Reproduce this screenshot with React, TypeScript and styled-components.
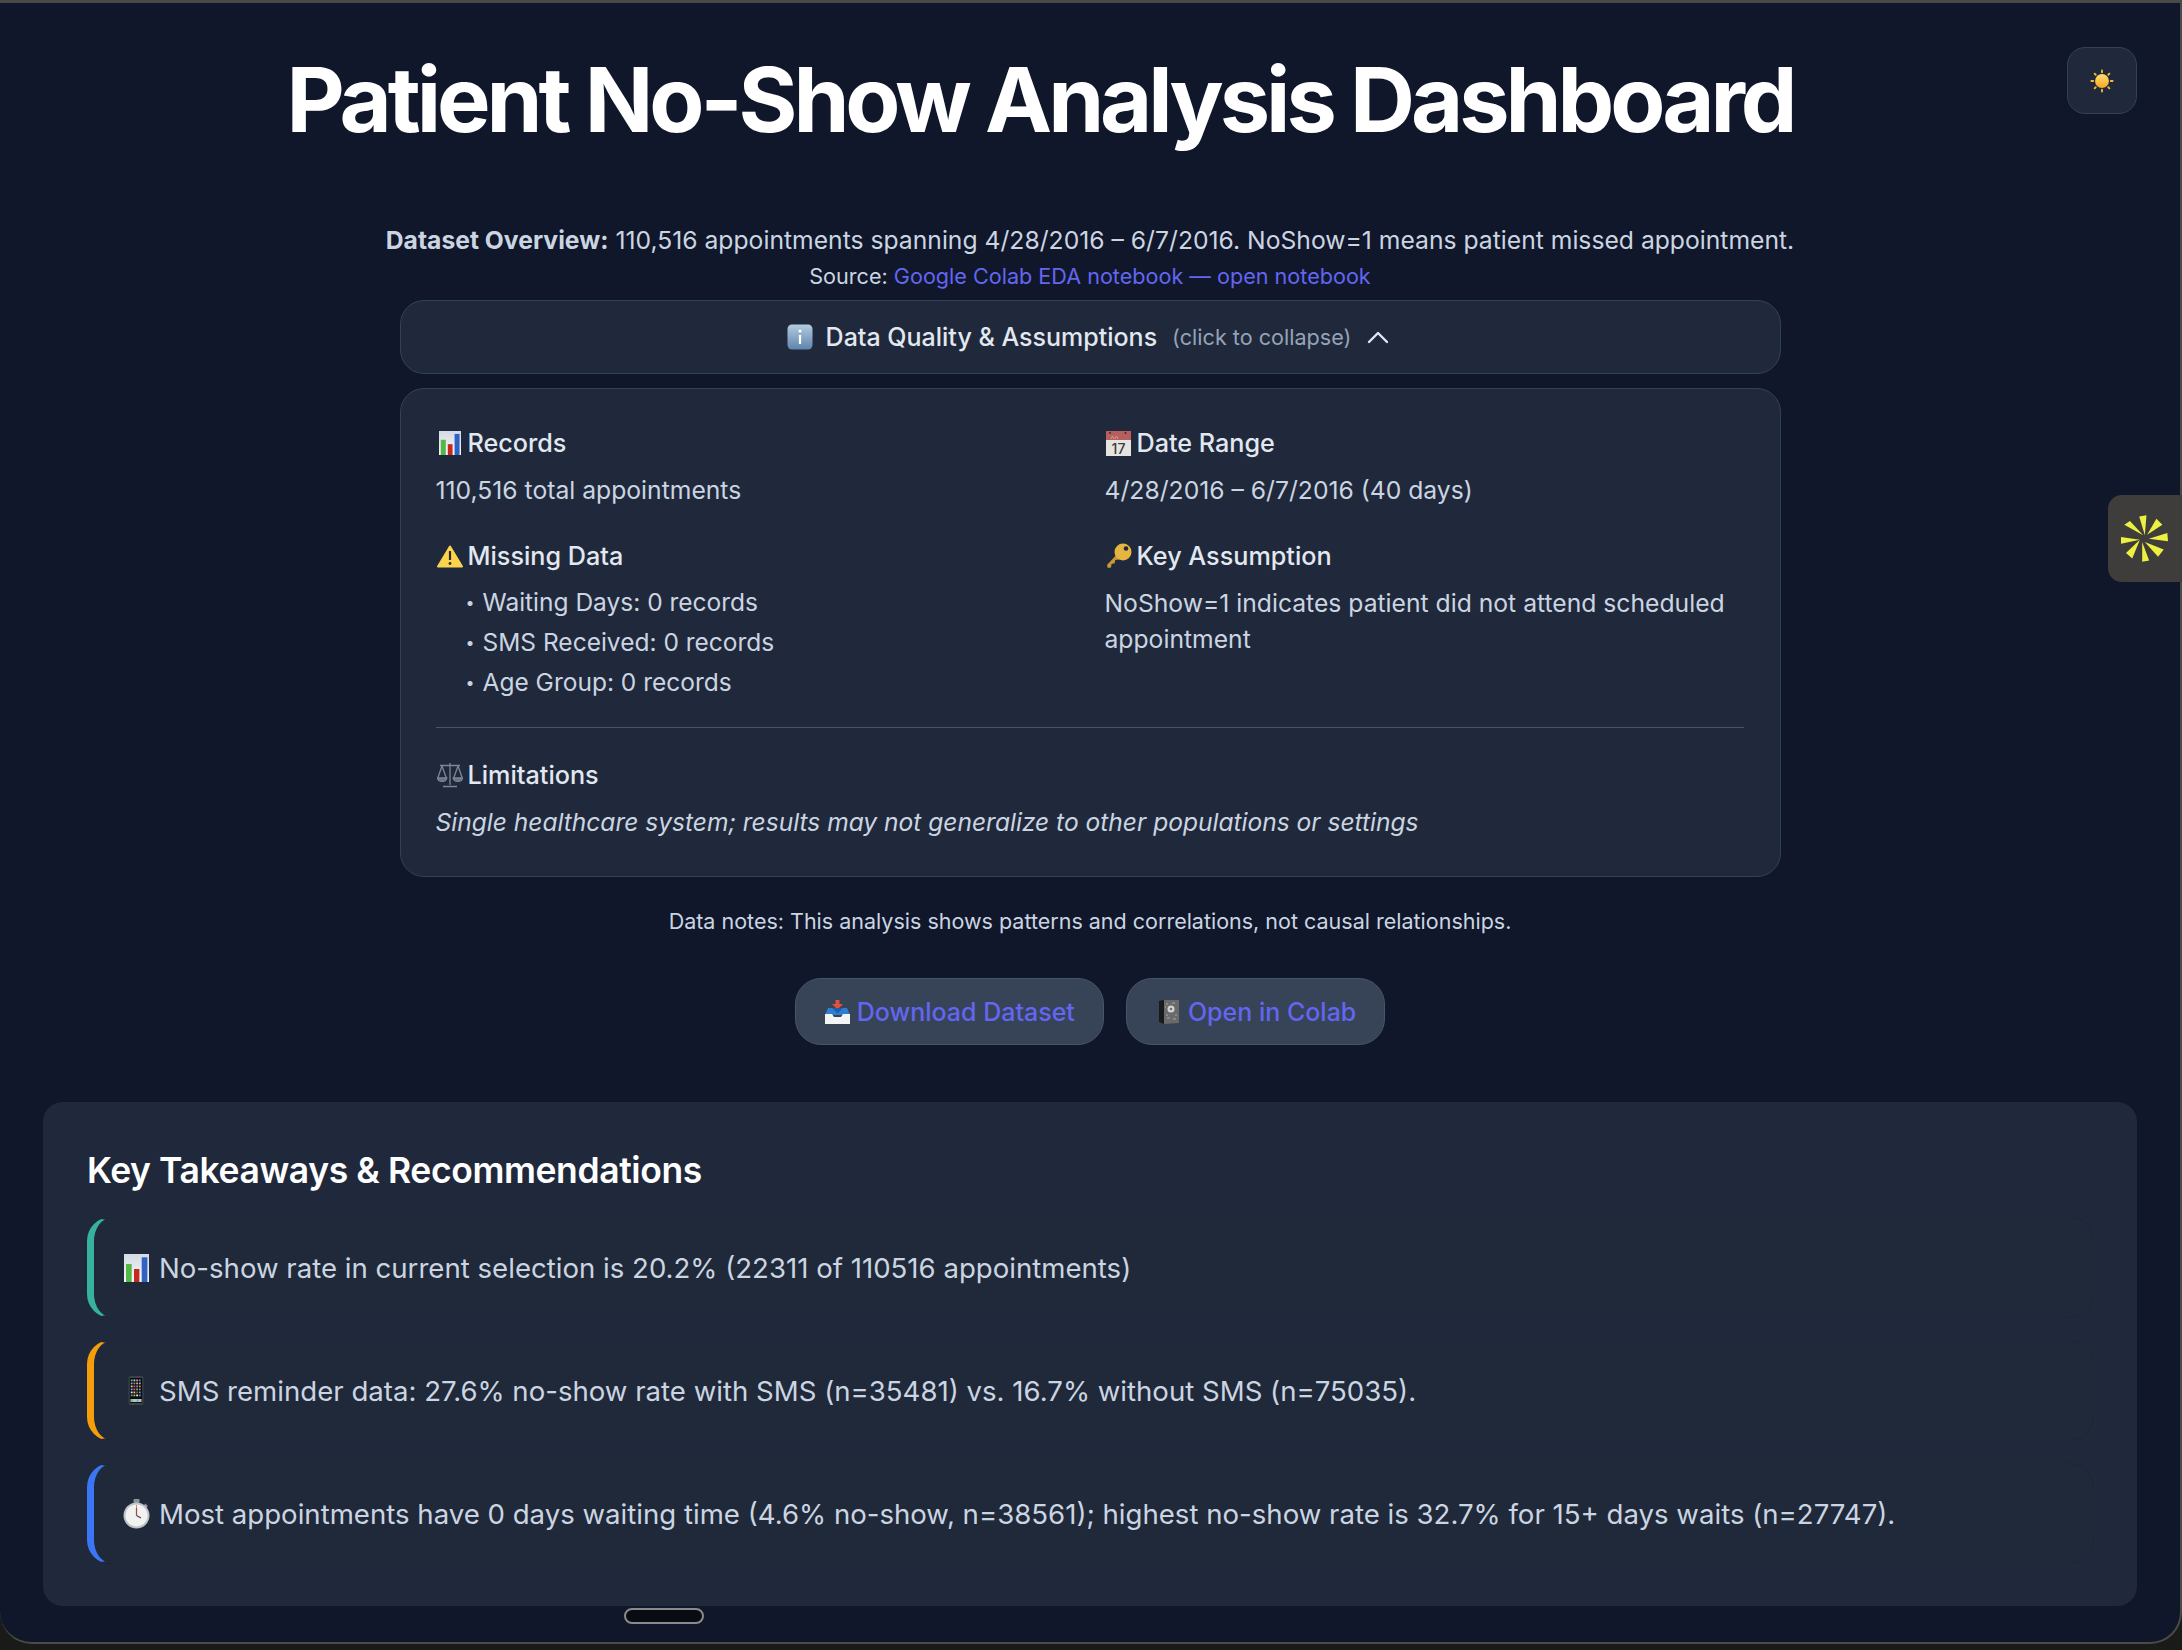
import React from "react";
import styled, { createGlobalStyle } from "styled-components";

const Global = createGlobalStyle`
  html, body { margin: 0; padding: 0; background: #1a1b18; }
  body { font-family: Inter, "Liberation Sans", sans-serif; }
  * { box-sizing: border-box; }
`;

const Page = styled.div`
  width: 2182px;
  height: 1650px;
  overflow: hidden;
  background: #1a1b18;
`;

const Frame = styled.div`
  position: relative;
  width: 2182px;
  height: 1644px;
  background: #10172a;
  border-style: solid;
  border-color: #4a4a48;
  border-width: 3px 2px 2px 0;
  border-radius: 0 0 32px 32px;
  padding: 0 43px;
`;

const Header = styled.header`
  display: flex;
  align-items: flex-start;
  gap: 30px;
  padding-top: 44px;
`;

const Title = styled.h1`
  flex: 1;
  margin: -2px 0 0;
  text-align: center;
  font-size: 90px;
  line-height: 110px;
  font-weight: 700;
  letter-spacing: -4.05px;
  color: #ffffff;
`;

const ThemeButton = styled.button`
  flex: none;
  width: 70px;
  height: 67px;
  border-radius: 18px;
  background: #20293b;
  border: 1px solid #334155;
  display: flex;
  align-items: center;
  justify-content: center;
  padding: 0;
`;

const Center = styled.section`
  width: 1381px;
  margin: 67px auto 0;
  text-align: center;
`;

const Overview = styled.p`
  margin: 0 -30px;
  font-size: 24.7px;
  line-height: 36px;
  color: #cbd5e1;
  strong { font-weight: 700; }
`;

const Source = styled.p`
  margin: 2px 0 8px;
  font-size: 21.6px;
  line-height: 32px;
  color: #cbd5e1;
`;

const Link = styled.a`
  color: #6366f1;
  text-decoration: none;
`;

const Toggle = styled.button`
  width: 100%;
  height: 74px;
  display: flex;
  align-items: center;
  justify-content: center;
  gap: 15px;
  background: #20293b;
  border: 1px solid #334155;
  border-radius: 24px;
  color: #e2e8f0;
  font-family: inherit;
  font-size: 25px;
  font-weight: 500;
  padding: 0 3px 0 0;
`;

const ToggleLabel = styled.span`
  display: inline-flex;
  align-items: center;
  gap: 13px;
`;

const Hint = styled.span`
  font-size: 21.6px;
  font-weight: 400;
  color: #94a3b8;
`;

const Card = styled.div`
  margin-top: 14px;
  height: 489px;
  background: #20293b;
  border: 1px solid #334155;
  border-radius: 24px;
  padding: 36px 36px 0 35px;
  text-align: left;
`;

const Columns = styled.div`
  display: grid;
  grid-template-columns: 641px 640px;
  column-gap: 28px;
`;

const Block = styled.div`
  margin-bottom: 30px;
  &:last-child { margin-bottom: 25px; }
`;

const BlockTitle = styled.h3`
  margin: 0 0 11px;
  display: flex;
  align-items: center;
  gap: 4px;
  font-size: 25.2px;
  line-height: 36px;
  font-weight: 500;
  color: #e2e8f0;
`;

const IconSlot = styled.span`
  flex: none;
  width: 28px;
  display: inline-flex;
  align-items: center;
  justify-content: center;
`;

const BlockText = styled.p<{ $italic?: boolean }>`
  margin: 0;
  font-size: ${(p) => (p.$italic ? "24.55px" : "24.7px")};
  line-height: 36px;
  color: #cbd5e1;
  font-style: ${(p) => (p.$italic ? "italic" : "normal")};
`;

const List = styled.ul`
  margin: -3px 0 0;
  padding: 0 0 0 30px;
  list-style: none;
`;

const ListItem = styled.li`
  display: flex;
  gap: 8px;
  font-size: 24.5px;
  line-height: 40px;
  color: #cbd5e1;
  &::before { content: "•"; font-size: 16px; }
`;

const Divider = styled.hr`
  margin: 0 0 29px;
  border: 0;
  border-top: 1px solid #475569;
`;

const Note = styled.p`
  margin: 28px 0 0;
  font-size: 21.5px;
  line-height: 32px;
  color: #cbd5e1;
`;

const Actions = styled.div`
  margin-top: 41px;
  display: flex;
  justify-content: center;
  gap: 22px;
`;

const ActionLink = styled.a`
  height: 67px;
  display: inline-flex;
  align-items: center;
  gap: 5px;
  padding: 0 28px;
  border-radius: 26px;
  background: #374357;
  border: 1px solid #475569;
  color: #6366f1;
  font-size: 25px;
  font-weight: 500;
  text-decoration: none;
`;

const Takeaways = styled.section`
  margin-top: 57px;
  height: 504px;
  background: #20293b;
  border-radius: 20px;
  padding: 46px 43px 0 44px;
`;

const TakeawaysTitle = styled.h2`
  margin: 0 0 23px;
  font-size: 35.5px;
  line-height: 46px;
  font-weight: 600;
  letter-spacing: -0.4px;
  color: #ffffff;
`;

const Items = styled.div`
  display: flex;
  flex-direction: column;
  gap: 22px;
`;

const Item = styled.div<{ $accent: string }>`
  height: 101px;
  display: flex;
  align-items: center;
  gap: 9px;
  padding-left: 28px;
  border-radius: 24px;
  background: #1f2939;
  border: 1px solid #1e2736;
  border-left: 7px solid ${(p) => p.$accent};
  font-size: 27.6px;
  color: #cbd5e1;
`;

const FloatTab = styled.div`
  position: absolute;
  right: -2px;
  top: 492px;
  width: 74px;
  height: 87px;
  background: #3f3d3b;
  border-radius: 14px 0 0 14px;
  display: flex;
  align-items: center;
  padding-left: 13px;
`;

const HomePill = styled.div`
  position: absolute;
  left: 624px;
  top: 1605px;
  width: 80px;
  height: 16px;
  border-radius: 8px;
  background: #0a0c14;
  border: 2px solid #8a8a8a;
`;

const Sun = () => (
  <svg width="24" height="24" viewBox="0 0 26 26">
    <defs><linearGradient id="s" x1="0" y1="0" x2="0" y2="1"><stop offset="0" stopColor="#ffe070" /><stop offset="1" stopColor="#f6a623" /></linearGradient></defs>
    <g stroke="#f5b93a" strokeWidth="2" strokeLinecap="round">
      <path d="M13 1.5v2M13 22.5v2M1.5 13h2M22.500 13h2M5 5l1.200 1.200M19.800 19.800 21 21M5 21l1.200-1.200M19.800 6.200 21 5" />
    </g>
    <circle cx="13" cy="13" r="7.500" fill="url(#s)" />
  </svg>
);
const Info = () => (
  <svg width="26" height="26" viewBox="0 0 26 26">
    <defs><linearGradient id="i" x1="0" y1="0" x2="0" y2="1"><stop offset="0" stopColor="#b4cbe2" /><stop offset="1" stopColor="#5f84ab" /></linearGradient></defs>
    <rect x="0.500" y="0.500" width="25" height="25" rx="4.500" fill="url(#i)" />
    <circle cx="13" cy="7" r="1.600" fill="#fff" />
    <rect x="11.900" y="11" width="2.200" height="9" fill="#fff" />
  </svg>
);
const Chart = ({ w = 22, gid }: { w?: number; gid: string }) => (
  <svg width={w} height={w * 1.12} viewBox="0 0 25 28">
    <defs><linearGradient id={gid} x1="0" y1="0" x2="0" y2="1"><stop offset="0" stopColor="#d4dbe4" /><stop offset="1" stopColor="#f6f8fa" /></linearGradient></defs>
    <rect width="25" height="28" fill={`url(#${gid})`} />
    <rect x="2" y="10" width="5.700" height="18" fill="#55b845" />
    <rect x="10" y="15" width="5.400" height="13" fill="#c5281f" />
    <rect x="17.700" y="3.300" width="5.700" height="24.700" fill="#2f62c2" />
  </svg>
);
const Calendar = () => (
  <svg width="25" height="25" viewBox="0 0 25 25">
    <rect width="25" height="9" fill="#b5605f" />
    <rect y="9" width="25" height="16" fill="#e6e4e1" />
    <circle cx="4" cy="2" r="1" fill="#3a2a2a" />
    <circle cx="19.500" cy="2" r="1" fill="#3a2a2a" />
    <path d="M5 8l1.500-3L8 8M9 8l1.500-3L12 8" stroke="#d99a98" strokeWidth="0.900" fill="none" />
    <text x="12.500" y="23" fontSize="14" fontWeight="500" textAnchor="middle" fill="#3c3c3c" fontFamily="Inter">17</text>
  </svg>
);
const Warning = () => (
  <svg width="26" height="23" viewBox="0 0 26 23">
    <path d="M13 1.500 25 21.500H1Z" fill="#fcd34d" stroke="#fcd34d" strokeWidth="2" strokeLinejoin="round" />
    <path d="M13 6v9" stroke="#2e2a1a" strokeWidth="2.200" />
    <circle cx="13" cy="18.500" r="1.400" fill="#2e2a1a" />
  </svg>
);
const KeyIcon = () => (
  <svg width="26" height="26" viewBox="0 0 26 26">
    <path d="M12.500 9.500 1 22l.8 3 3.200-.6L5.500 21l3.200-.8.500-3.200 4-.6 3-3Z" fill="#c9962f" />
    <circle cx="17" cy="9" r="8.500" fill="#e4b63f" />
    <circle cx="20" cy="5.500" r="2.300" fill="#20293b" />
  </svg>
);
const Scales = () => (
  <svg width="26" height="26" viewBox="0 0 26 26" fill="none" stroke="#7d8696" strokeWidth="1.300">
    <path d="M13 1v22M6 24.500h14M3 3.500h20M5 4 .8 16M5 4l4.300 12M21 4l-4.300 12M21 4l4.300 12" />
    <path d="M.5 16a4.700 4 0 0 0 9.300 0ZM16.200 16a4.700 4 0 0 0 9.300 0Z" fill="#69717f" />
  </svg>
);
const Inbox = () => (
  <svg width="25" height="24" viewBox="0 0 25 24">
    <path d="M12.500 0v5" stroke="#e2513f" strokeWidth="4" />
    <path d="M7 4h11l-5.500 5.500Z" fill="#e2513f" />
    <path d="M3 8h19l3 7H0Z" fill="#2f7fd1" />
    <path d="M7 8h11l-5.500 5.500Z" fill="#1f5fa8" />
    <path d="M0 14h7l2 3h7l2-3h7v10H0Z" fill="#f2f4f6" />
  </svg>
);
const Notebook = () => (
  <svg width="20" height="24" viewBox="0 0 20 24">
    <path d="M0 1 5 0v24L0 22Z" fill="#1a1a1a" />
    <path d="M5 0h15v23L5 24Z" fill="#6a6a6a" />
    <path d="M7 4h2M13 3h3M8 18h3M14 19h3M7 15h2M16 15h2M6 7h1" stroke="#a8a8a8" strokeWidth="1.200" />
    <circle cx="12" cy="9" r="3.500" fill="#d4d4d4" />
    <circle cx="12" cy="9" r="1.300" fill="#707070" />
  </svg>
);
const phoneDots = ["#62c26a","#c8d0dc","#e08ad0","#7a8a9a","#5ab0e0","#8a8a8a","#e8b040","#5ad0d0","#f0d050","#e05a5a","#a070e0","#e08a30","#5ab0e0","#e050a0","#62c26a","#8a8a8a","#e8e8e8","#f0d050","#6a6a6a","#50a0e0","#30a0e0","#f0a030","#e8e8e8","#7a8a9a"];
const Phone = () => (
  <svg width="16" height="29" viewBox="0 0 16 29">
    <rect x="0.500" y="0" width="15" height="29" rx="2.500" fill="#3e424a" />
    <rect x="1.800" y="2" width="12.400" height="25" fill="#0b0d14" />
    {phoneDots.map((c, i) => (
      <rect key={i} x={2.800 + (i % 4) * 2.700} y={3.500 + Math.floor(i / 4) * 3} width="1.800" height="1.800" fill={c} />
    ))}
    <rect x="2.500" y="23" width="11" height="3" fill="#b8c0b8" />
    <rect x="3" y="23.500" width="2" height="2" fill="#62c26a" />
    <rect x="8.500" y="23.500" width="2" height="2" fill="#5ab0e0" />
  </svg>
);
const Stopwatch = () => (
  <svg width="27" height="30" viewBox="0 0 27 30">
    <rect x="10.500" y="0" width="6" height="4" rx="1" fill="#8e939b" />
    <path d="m21.500 5.500 2.500 2.500" stroke="#8e939b" strokeWidth="2.600" />
    <circle cx="13.500" cy="16.500" r="13" fill="#bfc3ca" />
    <circle cx="13.500" cy="16.500" r="11" fill="#f2f2f0" />
    <path d="M13.500 16.500V9M13.500 16.500l4.500 2.500" stroke="#444" strokeWidth="1.200" />
    <path d="M13.500 17v-11" stroke="#d24a3a" strokeWidth="0.700" />
  </svg>
);
const Chevron = () => (
  <svg width="24" height="24" viewBox="0 0 24 24" fill="none" stroke="#e2e8f0" strokeWidth="2.400" strokeLinecap="round" strokeLinejoin="round">
    <path d="m3 17 9-9 9 9" />
  </svg>
);
const Spark = () => (
  <svg width="47" height="47" viewBox="93 104 142 141" fill="#eef03f">
    <path d="M148 108 170 104 165 165Z" />
    <path d="M200 115 218 133 172 163Z" />
    <path d="M233 158 235 183 177 175Z" />
    <path d="M222 208 205 230 165 185Z" />
    <path d="M178 241 157 245 157 185Z" />
    <path d="M127 235 108 218 150 178Z" />
    <path d="M93 170 93 190 150 178Z" />
    <path d="M103 133 120 122 160 165Z" />
  </svg>
);

export default function App() {
  return (
    <Page>
      <Global />
      <Frame>
        <Header>
          <Title>Patient No-Show Analysis Dashboard</Title>
          <ThemeButton><Sun /></ThemeButton>
        </Header>
        <Center>
          <Overview>
            <strong>Dataset Overview:</strong> 110,516 appointments spanning 4/28/2016 – 6/7/2016. NoShow=1 means patient missed appointment.
          </Overview>
          <Source>Source: <Link>Google Colab EDA notebook — open notebook</Link></Source>
          <Toggle>
            <ToggleLabel><Info />Data Quality &amp; Assumptions</ToggleLabel>
            <Hint>(click to collapse)</Hint>
            <Chevron />
          </Toggle>
          <Card>
            <Columns>
              <div>
                <Block>
                  <BlockTitle><IconSlot><Chart gid="c1" /></IconSlot>Records</BlockTitle>
                  <BlockText>110,516 total appointments</BlockText>
                </Block>
                <Block>
                  <BlockTitle><IconSlot><Warning /></IconSlot>Missing Data</BlockTitle>
                  <List>
                    <ListItem>Waiting Days: 0 records</ListItem>
                    <ListItem>SMS Received: 0 records</ListItem>
                    <ListItem>Age Group: 0 records</ListItem>
                  </List>
                </Block>
              </div>
              <div>
                <Block>
                  <BlockTitle><IconSlot><Calendar /></IconSlot>Date Range</BlockTitle>
                  <BlockText>4/28/2016 – 6/7/2016 (40 days)</BlockText>
                </Block>
                <Block>
                  <BlockTitle><IconSlot><KeyIcon /></IconSlot>Key Assumption</BlockTitle>
                  <BlockText>NoShow=1 indicates patient did not attend scheduled appointment</BlockText>
                </Block>
              </div>
            </Columns>
            <Divider />
            <BlockTitle><IconSlot><Scales /></IconSlot>Limitations</BlockTitle>
            <BlockText $italic>Single healthcare system; results may not generalize to other populations or settings</BlockText>
          </Card>
          <Note>Data notes: This analysis shows patterns and correlations, not causal relationships.</Note>
          <Actions>
            <ActionLink><IconSlot><Inbox /></IconSlot>Download Dataset</ActionLink>
            <ActionLink><IconSlot><Notebook /></IconSlot>Open in Colab</ActionLink>
          </Actions>
        </Center>
        <Takeaways>
          <TakeawaysTitle>Key Takeaways &amp; Recommendations</TakeawaysTitle>
          <Items>
            <Item $accent="#38b2a0"><IconSlot><Chart w={25} gid="c2" /></IconSlot>No-show rate in current selection is 20.2% (22311 of 110516 appointments)</Item>
            <Item $accent="#f59e0b"><IconSlot><Phone /></IconSlot>SMS reminder data: 27.6% no-show rate with SMS (n=35481) vs. 16.7% without SMS (n=75035).</Item>
            <Item $accent="#3b76f6"><IconSlot><Stopwatch /></IconSlot>Most appointments have 0 days waiting time (4.6% no-show, n=38561); highest no-show rate is 32.7% for 15+ days waits (n=27747).</Item>
          </Items>
        </Takeaways>
        <FloatTab><Spark /></FloatTab>
        <HomePill />
      </Frame>
    </Page>
  );
}
